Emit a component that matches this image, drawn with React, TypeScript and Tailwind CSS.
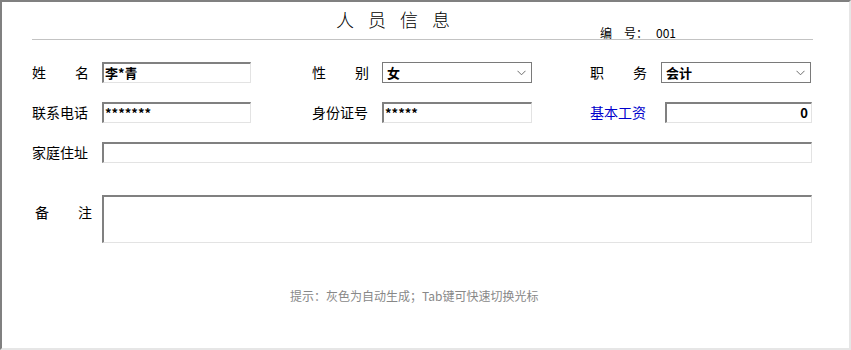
const font = "font-['SimSun','Noto_Sans_CJK_SC','Liberation_Sans',sans-serif]";

function Label({ text, spread = true, className = "" }: { text: string; spread?: boolean; className?: string }) {
  if (!spread) return <div className={`text-[14px] text-black ${className}`}>{text}</div>;
  const chars = text.split("");
  return (
    <div className={`flex justify-between w-[57px] text-[14px] text-black ${className}`}>
      {chars.map((c, i) => (
        <span key={i}>{c}</span>
      ))}
    </div>
  );
}

function TextBox({ value = "", width, align = "left" }: { value?: string; width: string; align?: "left" | "right" }) {
  return (
    <div
      className={`${width} h-[21px] border-t-2 border-l-2 border-t-[#808080] border-l-[#808080] border-r border-b border-r-[#e3e3e3] border-b-[#e3e3e3] bg-white flex items-center px-[1px] text-[13px] font-bold text-black ${align === "right" ? "justify-end pr-[3px]" : ""}`}
    >
      {value}
    </div>
  );
}

function Select({ value }: { value: string }) {
  return (
    <div className="w-[150px] h-[21px] border border-[#7a7a7a] bg-white flex items-center justify-between pl-[4px] pr-[5px] text-[13px] font-bold text-black">
      <span>{value}</span>
      <svg width="9" height="6" viewBox="0 0 9 6" className="text-[#6d6d6d]">
        <path d="M0.5 0.8 L4.5 4.8 L8.5 0.8" fill="none" stroke="currentColor" strokeWidth="1" />
      </svg>
    </div>
  );
}

export default function App() {
  return (
    <div className={`w-[851px] h-[350px] bg-white border-t-2 border-l-2 border-t-[#808080] border-l-[#808080] border-r-2 border-b-2 border-r-[#e6e6e6] border-b-[#e6e6e6] ${font}`}>
      <div className="pl-[30px] w-[811px]">
        <div className="relative h-[38px] border-b border-[#c3c3c3]">
          <div className="absolute left-[304px] top-[8px] text-[18px] tracking-[14px] text-black leading-none font-light">人员信息</div>
          <div className="absolute left-[568px] top-[25px] flex text-[12px] text-black leading-none">
            <span>编</span>
            <span className="ml-[12px]">号：</span>
            <span className="ml-[8px]">001</span>
          </div>
        </div>

        <div className="flex items-center mt-[22px]">
          <Label text="姓名" />
          <div className="ml-[13px]">
            <TextBox value="李*青" width="w-[149px]" />
          </div>
          <Label text="性别" className="ml-[61px]" />
          <div className="ml-[13px]">
            <Select value="女" />
          </div>
          <Label text="职务" className="ml-[58px]" />
          <div className="ml-[14px]">
            <Select value="会计" />
          </div>
        </div>

        <div className="flex items-center mt-[19px]">
          <Label text="联系电话" spread={false} className="w-[70px]" />
          <TextBox value="*******" width="w-[149px]" />
          <Label text="身份证号" spread={false} className="ml-[61px] w-[70px]" />
          <TextBox value="*****" width="w-[150px]" />
          <Label text="基本工资" spread={false} className="ml-[58px] w-[75px] !text-[#0000cc]" />
          <TextBox value="0" width="w-[147px]" align="right" />
        </div>

        <div className="flex items-center mt-[19px]">
          <Label text="家庭住址" spread={false} className="w-[70px]" />
          <TextBox width="w-[710px]" />
        </div>

        <div className="flex items-start mt-[32px]">
          <div className="w-[70px] pt-[7px] pl-[3px]">
            <Label text="备注" className="w-[54px]" />
          </div>
          <div className="w-[710px] h-[48px] border-t-2 border-l-2 border-t-[#808080] border-l-[#808080] border-r border-b border-r-[#e3e3e3] border-b-[#e3e3e3] bg-white" />
        </div>

        <div className="mt-[44px] pl-[258px] text-[12px] text-[#888888]">
          提示：灰色为自动生成；Tab键可快速切换光标
        </div>
      </div>
    </div>
  );
}
